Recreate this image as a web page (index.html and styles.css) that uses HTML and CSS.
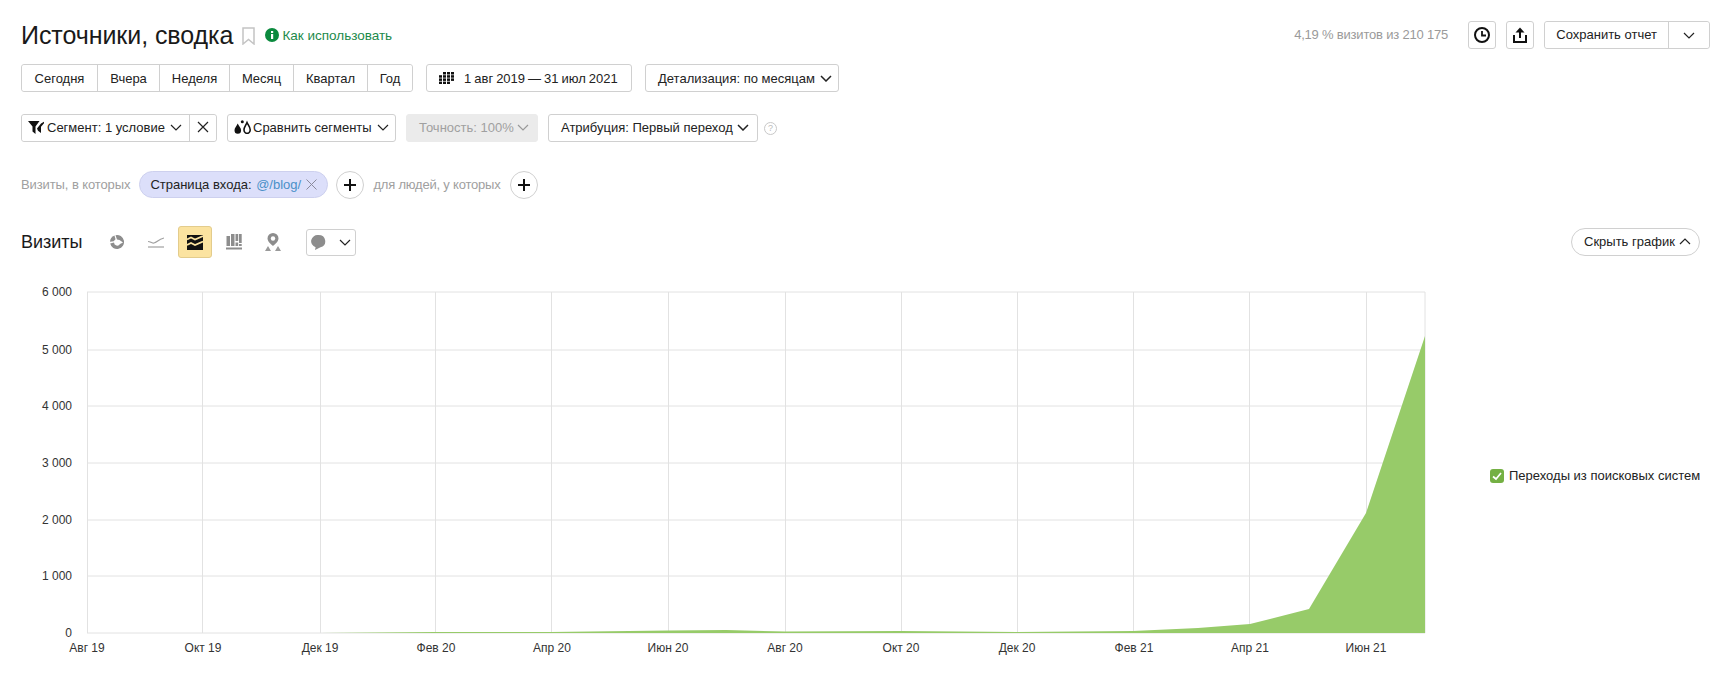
FILE: index.html
```html
<!DOCTYPE html>
<html lang="ru">
<head>
<meta charset="utf-8">
<title>Источники, сводка</title>
<link rel="stylesheet" href="styles.css">
</head>
<body>
<div class="page">
  <header class="top">
    <div class="title-group">
      <h1 class="title">Источники, сводка</h1>
      <svg class="bookmark" viewBox="0 0 13 18" width="13" height="18"><path d="M1 1h11v16l-5.500-4.500L1 17z" fill="#fff" stroke="#c4c4c4" stroke-width="1.500"/></svg>
      <a class="howto"><svg class="info" viewBox="0 0 14 14" width="14" height="14"><circle cx="7" cy="7" r="7" fill="#0b8a3e"/><rect x="6" y="6" width="2.200" height="5" fill="#fff"/><rect x="6" y="3" width="2.200" height="2" fill="#fff"/></svg>Как использовать</a>
    </div>
    <div class="top-right">
      <span class="visits">4,19 % визитов из 210 175</span>
      <button class="btn square"><svg viewBox="0 0 18 18" width="18" height="18"><circle cx="9" cy="9" r="7" fill="none" stroke="#111" stroke-width="2"/><path d="M9 5v4.500h4" fill="none" stroke="#111" stroke-width="1.800"/></svg></button>
      <button class="btn square"><svg viewBox="0 0 18 18" width="18" height="18"><path d="M3 9v7h12V9" fill="none" stroke="#111" stroke-width="2"/><path d="M9 12V3" stroke="#111" stroke-width="2"/><path d="M4.500 6.500L9 1.500l4.500 5z" fill="#111"/></svg></button>
      <div class="btn-group save">
        <button class="seg save-main">Сохранить отчет</button>
        <button class="seg save-arrow"><svg class="chev" viewBox="0 0 12 7" width="12" height="7"><path d="M1 1l5 5 5-5" fill="none" stroke="#222" stroke-width="1.200"/></svg></button>
      </div>
    </div>
  </header>

  <div class="row row-dates">
    <div class="btn-group">
      <button class="seg p-today">Сегодня</button>
      <button class="seg p-yest">Вчера</button>
      <button class="seg p-week">Неделя</button>
      <button class="seg p-month">Месяц</button>
      <button class="seg p-quarter">Квартал</button>
      <button class="seg p-year">Год</button>
    </div>
    <button class="btn date"><svg viewBox="0 0 15 12" width="15" height="12"><g fill="#111"><rect x="4" y="0" width="3" height="2.500"/><rect x="8" y="0" width="3" height="2.500"/><rect x="12" y="0" width="3" height="2.500"/><rect x="0" y="3.200" width="3" height="2.500"/><rect x="4" y="3.200" width="3" height="2.500"/><rect x="8" y="3.200" width="3" height="2.500"/><rect x="12" y="3.200" width="3" height="2.500"/><rect x="0" y="6.400" width="3" height="2.500"/><rect x="4" y="6.400" width="3" height="2.500"/><rect x="8" y="6.400" width="3" height="2.500"/><rect x="12" y="6.400" width="3" height="2.500"/><rect x="0" y="9.600" width="3" height="2.400"/><rect x="4" y="9.600" width="3" height="2.400"/><rect x="8" y="9.600" width="3" height="2.400"/></g></svg><span>1 авг 2019 — 31 июл 2021</span></button>
    <button class="btn detail">Детализация: по месяцам<svg class="chev" viewBox="0 0 12 7" width="12" height="7"><path d="M1 1l5 5 5-5" fill="none" stroke="#222" stroke-width="1.500"/></svg></button>
  </div>

  <div class="row row-filters">
    <div class="btn-group segment">
      <button class="seg seg-main"><svg viewBox="0 0 16 13" width="16" height="13"><path d="M0 0h11.500L7.500 5.500V13L4.500 10.500V5.500z" fill="#111"/><path d="M9 7.500L13 2.500 16 0.800v1.500l-3 3.500V12l-3-2.200z" fill="#111"/></svg>Сегмент: 1 условие<svg class="chev" viewBox="0 0 12 7" width="12" height="7"><path d="M1 1l5 5 5-5" fill="none" stroke="#222" stroke-width="1.200"/></svg></button>
      <button class="seg seg-close"><svg viewBox="0 0 12 12" width="12" height="12"><path d="M1 1l10 10M11 1L1 11" stroke="#222" stroke-width="1.200"/></svg></button>
    </div>
    <button class="btn compare"><svg viewBox="0 0 17 14" width="17" height="14"><path d="M3.700 3.500C2.700 6 .5 8 .5 10.300a3.300 3.500 0 0 0 6.600 0C7.100 8 4.800 6 3.700 3.500z" fill="#111"/><path d="M13 2.500c-1 2.400-3 4.600-3 7.300a3.100 3.600 0 0 0 6.200 0c0-2.700-2.200-4.900-3.200-7.300z" fill="#fff" stroke="#111" stroke-width="1.600"/><circle cx="8.300" cy="1.800" r="1.500" fill="#111"/></svg>Сравнить сегменты<svg class="chev" viewBox="0 0 12 7" width="12" height="7"><path d="M1 1l5 5 5-5" fill="none" stroke="#222" stroke-width="1.200"/></svg></button>
    <button class="btn accuracy">Точность: 100%<svg class="chev" viewBox="0 0 12 7" width="12" height="7"><path d="M1 1l5 5 5-5" fill="none" stroke="#999" stroke-width="1.200"/></svg></button>
    <button class="btn attr">Атрибуция: Первый переход<svg class="chev" viewBox="0 0 12 7" width="12" height="7"><path d="M1 1l5 5 5-5" fill="none" stroke="#222" stroke-width="1.500"/></svg></button>
    <span class="help">?</span>
  </div>

  <div class="row row-conds">
    <span class="cond-label">Визиты, в которых</span>
    <span class="pill">Страница входа:&nbsp;<span class="pill-val">@/blog/</span><svg viewBox="0 0 11 11" width="11" height="11"><path d="M.5.500l10 10M10.500.500l-10 10" stroke="#8a8a9c" stroke-width="1"/></svg></span>
    <button class="plus"><svg viewBox="0 0 12 12" width="12" height="12"><path d="M6 0v12M0 6h12" stroke="#111" stroke-width="2"/></svg></button>
    <span class="cond-label people">для людей, у которых</span>
    <button class="plus"><svg viewBox="0 0 12 12" width="12" height="12"><path d="M6 0v12M0 6h12" stroke="#111" stroke-width="2"/></svg></button>
  </div>

  <div class="chart-head">
    <h2 class="chart-title">Визиты</h2>
    <div class="types">
      <span class="type"><svg viewBox="0 0 16 16" width="16" height="16"><path d="M6.500 1.200A7 7 0 1 1 1.200 9.500L5 8.500a3.200 3.200 0 0 0 6 1.500l3-1.500-3.500-2.500-2.500-.5z" fill="#8d8d8d"/><path d="M5.500 1.400A7 7 0 0 0 1 7.700L4.700 7.200 6.500 5.200z" fill="#8d8d8d"/></svg></span>
      <span class="type"><svg viewBox="0 0 16 12" width="16" height="12"><path d="M0 5.500c3 0 3 2 6 1.500s4-3.500 10-5" fill="none" stroke="#a0a0a0" stroke-width="1.200"/><path d="M0 11h16" stroke="#a0a0a0" stroke-width="1.200"/></svg></span>
      <span class="type active"><svg viewBox="0 0 16 15" width="16" height="15"><rect width="16" height="15" fill="#111"/><path d="M0 4.500L4 2.500l4 2 8-3.500M0 10L4 8l4 2 8-3.500" fill="none" stroke="#fbe3a0" stroke-width="1.800"/></svg></span>
      <span class="type"><svg viewBox="0 0 16 16" width="16" height="16"><g fill="#8d8d8d"><rect x="0.500" y="2" width="3.500" height="10"/><rect x="5" y="0" width="3.500" height="12"/><rect x="9.500" y="0" width="2.700" height="7"/><rect x="9.500" y="8.500" width="2.700" height="3.500"/><rect x="13" y="0" width="2.700" height="9"/><rect x="13" y="10" width="2.700" height="2"/><rect x="0" y="13.500" width="16" height="2"/></g></svg></span>
      <span class="type"><svg viewBox="0 0 16 18" width="16" height="18"><path d="M8 0a5.500 5.500 0 0 0-5.500 5.500C2.500 9 8 13 8 13s5.500-4 5.500-7.500A5.500 5.500 0 0 0 8 0z" fill="#8d8d8d"/><circle cx="8" cy="5.500" r="2.200" fill="#fff"/><path d="M0 18l3-5 3 5zM10 18l3-5 3 5z" fill="#9a9a9a"/></svg></span>
    </div>
    <button class="btn notes"><svg viewBox="0 0 15 15" width="15" height="15"><path d="M7.500 0a6.800 6.300 0 0 1 2 12.300L4 15l.6-2.800A6.800 6.300 0 0 1 7.500 0z" fill="#8d8d8d"/></svg><svg class="chev" viewBox="0 0 12 7" width="12" height="7"><path d="M1 1l5 5 5-5" fill="none" stroke="#222" stroke-width="1.200"/></svg></button>
    <button class="btn hide-chart">Скрыть график<svg class="chev" viewBox="0 0 12 7" width="12" height="7"><path d="M1 6l5-5 5 5" fill="none" stroke="#222" stroke-width="1.200"/></svg></button>
  </div>

  <div class="chart-area">
    <svg class="chart" viewBox="0 0 1440 380" width="1440" height="380">
      <g class="grid">
        <path d="M87 292H1425M87 350H1425M87 406H1425M87 463H1425M87 520H1425M87 576H1425M87 633H1425" transform="translate(0 -280)"/>
        <path d="M87.500 292V633M202.500 292V633M320.500 292V633M435.500 292V633M551.500 292V633M668.500 292V633M785.500 292V633M901.500 292V633M1017.500 292V633M1133.500 292V633M1249.500 292V633M1366.500 292V633M1425 292V633" transform="translate(0 -280)"/>
      </g>
      <path class="area" transform="translate(0 -280)" d="M320 633L435 632L551 632L668 630.500L726 630L785 631.500L901 631L1017 632L1133 631L1198 628L1250 624L1309 609L1366 513L1425 336V633Z"/>
      <g class="ylabels" transform="translate(0 -280)">
        <text x="72" y="296">6 000</text><text x="72" y="354">5 000</text><text x="72" y="410">4 000</text><text x="72" y="467">3 000</text><text x="72" y="524">2 000</text><text x="72" y="580">1 000</text><text x="72" y="637">0</text>
      </g>
      <g class="xlabels" transform="translate(0 -280)">
        <text x="87" y="652">Авг 19</text><text x="203" y="652">Окт 19</text><text x="320" y="652">Дек 19</text><text x="436" y="652">Фев 20</text><text x="552" y="652">Апр 20</text><text x="668" y="652">Июн 20</text><text x="785" y="652">Авг 20</text><text x="901" y="652">Окт 20</text><text x="1017" y="652">Дек 20</text><text x="1134" y="652">Фев 21</text><text x="1250" y="652">Апр 21</text><text x="1366" y="652">Июн 21</text>
      </g>
    </svg>
    <label class="legend"><svg viewBox="0 0 14 14" width="14" height="14"><rect width="14" height="14" rx="3" fill="#74b043"/><path d="M3 7.500l3 2.500 5-6" fill="none" stroke="#fff" stroke-width="1.700"/></svg>Переходы из поисковых систем</label>
  </div>
</div>
</body>
</html>
```

FILE: styles.css
```css
* { box-sizing: border-box; }
html, body { margin: 0; padding: 0; background: #fff; }
body { font-family: "Liberation Sans", Arial, sans-serif; color: #222; font-size: 13px; width: 1721px; height: 674px; overflow: hidden; }
.page { padding: 21px 21px 0 21px; }
button { font: inherit; color: inherit; background: #fff; padding: 0; margin: 0; cursor: pointer; }
svg { display: block; flex: none; }

.top { display: flex; justify-content: space-between; align-items: center; height: 28px; margin-right: -10px; }
.title-group { display: flex; align-items: center; }
.title { font-size: 25px; font-weight: 400; margin: 0; color: #1a1a1a; line-height: 28px; letter-spacing: -0.060px; }
.bookmark { margin-left: 9px; margin-top: 2px; }
.howto { display: flex; align-items: center; margin-left: 10px; color: #1c8a4b; font-size: 13.500px; }
.info { margin-right: 3px; }
.top-right { display: flex; align-items: center; }
.visits { color: #9a9a9a; font-size: 13px; margin: 0 20px 2px 0; letter-spacing: -0.200px; }

.btn { display: flex; align-items: center; border: 1px solid #d0d0d0; border-radius: 3px; height: 28px; white-space: nowrap; }
.square { width: 28px; justify-content: center; margin-right: 10px; }
.btn-group { display: flex; border: 1px solid #d0d0d0; border-radius: 3px; height: 28px; }
.seg { border: 0; border-left: 1px solid #d0d0d0; height: 26px; display: flex; align-items: center; justify-content: center; white-space: nowrap; }
.seg:first-child { border-left: 0; border-radius: 3px 0 0 3px; }
.seg:last-child { border-radius: 0 3px 3px 0; }
.save-main { width: 124px; padding-bottom: 2px; }
.save-arrow { width: 41px; }
.save { width: 166px; }

.row { display: flex; align-items: center; }
.row-dates { margin-top: 15px; height: 28px; }
.p-today { width: 75px; }
.p-yest { width: 62px; }
.p-week { width: 70px; }
.p-month { width: 64px; }
.p-quarter { width: 74px; }
.p-year { width: 45px; }
.date { margin-left: 13px; width: 206px; padding-left: 12px; }
.date span { margin-left: 10px; word-spacing: -0.600px; }
.detail { margin-left: 13px; width: 194px; padding-left: 12px; }
.detail .chev { margin-left: 5px; }

.row-filters { margin-top: 22px; height: 28px; }
.row-filters .seg, .row-filters .btn { padding-bottom: 2px; }
.segment { width: 196px; }
.seg-main { width: 167px; justify-content: flex-start; padding-left: 6px; }
.seg-main svg:first-child { margin-right: 3px; }
.seg-main .chev { margin-left: 5px; }
.seg-close { width: 27px; }
.compare { margin-left: 10px; width: 169px; padding-left: 6px; }
.compare svg:first-child { margin-right: 2px; }
.compare .chev { margin-left: 5px; }
.accuracy { margin-left: 10px; width: 132px; padding-left: 12px; background: #ebebeb; border-color: #ebebeb; color: #a0a0a0; }
.accuracy .chev { margin-left: 3px; }
.attr { margin-left: 10px; width: 210px; padding-left: 12px; }
.attr .chev { margin-left: 4px; }
.help { margin-left: 6px; width: 13px; height: 13px; border: 1px solid #c8c8c8; border-radius: 50%; color: #bbb; font-size: 9px; line-height: 11px; text-align: center; margin-top: 0; }

.row-conds { margin-top: 29px; height: 28px; }
.cond-label { color: #a0a0a0; font-size: 13px; letter-spacing: -0.100px; margin-bottom: 2px; }
.pill { display: flex; align-items: center; align-self: flex-start; margin-left: 9px; height: 27px; width: 189px; padding: 0 0 1px 10px; background: #dcdffa; border: 1px solid #cdd0ee; border-radius: 14px; white-space: nowrap; }
.pill-val { color: #4a90c8; margin-left: 1px; }
.pill svg { margin-left: 5px; }
.plus { display: flex; align-items: center; justify-content: center; width: 28px; height: 28px; border: 1px solid #d0d0d0; border-radius: 50%; margin-left: 8px; }
.cond-label.people { margin-left: 9px; letter-spacing: -0.200px; }
.plus:last-child { margin-left: 9px; }

.chart-head { display: flex; align-items: center; margin-top: 27px; height: 32px; }
.chart-title { font-size: 18px; font-weight: 400; margin: 0; color: #1a1a1a; width: 79px; }
.types { display: flex; align-items: center; }
.type { display: flex; align-items: center; justify-content: center; width: 34px; height: 32px; margin-right: 5px; border-radius: 3px; border: 1px solid transparent; }
.type.active { background: #fbe3a0; border-color: #e3cc8c; }
.notes { width: 50px; height: 27px; margin-left: 11px; padding-left: 4px; gap: 13px; }
.hide-chart { margin-left: auto; margin-right: 0; width: 129px; height: 28px; border-radius: 14px; padding: 0 0 2px 12px; }
.hide-chart .chev { margin-left: 4px; }

.chart-area { display: flex; margin: 22px 0 0 -21px; align-items: flex-start; }
.chart { flex: none; }
.grid path { stroke: #e2e2e2; stroke-width: 1; fill: none; }
.area { fill: #97cb69; }
.ylabels text { font: 12px "Liberation Sans", Arial, sans-serif; fill: #333; text-anchor: end; }
.xlabels text { font: 12px "Liberation Sans", Arial, sans-serif; fill: #333; text-anchor: middle; }
.legend { display: flex; align-items: center; gap: 5px; margin: 188px 0 0 50px; white-space: nowrap; }
```
